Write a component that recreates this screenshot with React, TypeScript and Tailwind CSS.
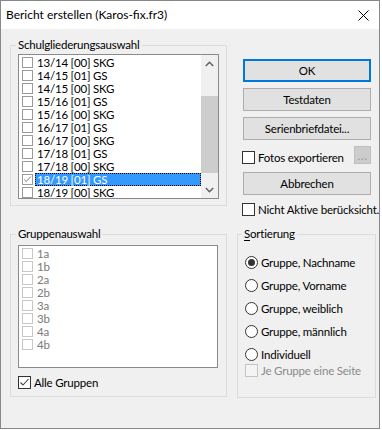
import React from 'react';

const schulItems = [
    '13/14 [00] SKG',
    '14/15 [01] GS',
    '14/15 [00] SKG',
    '15/16 [01] GS',
    '15/16 [00] SKG',
    '16/17 [01] GS',
    '16/17 [00] SKG',
    '17/18 [01] GS',
    '17/18 [00] SKG',
    '18/19 [01] GS',
    '18/19 [00] SKG',
];
const gruppen = ['1a', '1b', '2a', '2b', '3a', '3b', '4a', '4b'];
const sortierung = ['Gruppe, Nachname', 'Gruppe, Vorname', 'Gruppe, weiblich', 'Gruppe, männlich', 'Individuell'];

function Tick({ color }: { color: string }) {
    return (
        <svg width="11" height="11" viewBox="0 0 11 11" className="block">
            <path d="M1.5 5.5 L4 8 L9.5 2" fill="none" stroke={color} strokeWidth="1.1" />
        </svg>
    );
}

// 13px box used on the dialog surface
function Box({ checked, disabled }: { checked?: boolean; disabled?: boolean }) {
    return (
        <div
            className={
                disabled
                    ? 'flex h-[13px] w-[13px] shrink-0 items-center justify-center border border-[#c4c4c4] bg-[#f4f4f4]'
                    : 'flex h-[13px] w-[13px] shrink-0 items-center justify-center border border-[#333] bg-white'
            }
        >
            {checked && <Tick color="#444" />}
        </div>
    );
}

// smaller box inside the check list boxes
function ListBox({ checked, disabled }: { checked?: boolean; disabled?: boolean }) {
    return (
        <div
            className={
                disabled
                    ? 'flex h-[11px] w-[11px] shrink-0 items-center justify-center border border-[#c8c8c8]'
                    : 'flex h-[11px] w-[11px] shrink-0 items-center justify-center border border-[#9a9a9a]'
            }
        >
            {checked && <Tick color="#6a6a6a" />}
        </div>
    );
}

function Radio({ checked }: { checked?: boolean }) {
    return (
        <div className="flex h-[13px] w-[13px] shrink-0 items-center justify-center rounded-full border border-[#333] bg-white">
            {checked && <div className="h-[7px] w-[7px] rounded-full bg-[#333]" />}
        </div>
    );
}

function Button({ label, focused }: { label: string; focused?: boolean }) {
    return (
        <div
            className={
                focused
                    ? 'flex h-[23px] w-[128px] items-center justify-center border-2 border-[#0078d7] bg-[#e1e1e1]'
                    : 'flex h-[23px] w-[128px] items-center justify-center border border-[#adadad] bg-[#e1e1e1]'
            }
        >
            {label}
        </div>
    );
}

function ScrollBar() {
    return (
        <div className="flex w-[17px] shrink-0 flex-col bg-[#f0f0f0]">
            <div className="flex h-[17px] items-center justify-center">
                <svg width="9" height="6" viewBox="0 0 9 6">
                    <path d="M0.8 5 L4.5 1.3 L8.2 5" fill="none" stroke="#606060" strokeWidth="1.5" />
                </svg>
            </div>
            <div className="flex-1">
                <div className="mt-[24px] h-[77px] bg-[#cdcdcd]" />
            </div>
            <div className="flex h-[17px] items-center justify-center">
                <svg width="9" height="6" viewBox="0 0 9 6">
                    <path d="M0.8 1 L4.5 4.7 L8.2 1" fill="none" stroke="#606060" strokeWidth="1.5" />
                </svg>
            </div>
        </div>
    );
}

export default function App() {
    return (
        <div className="h-[430px] w-[382px] bg-white font-['Lato',sans-serif] text-[11.5px] tracking-[-0.2px] text-black">
            <div className="flex h-[429px] w-[380px] flex-col border border-[#888] bg-[#f0f0f0]">
                {/* title bar */}
                <div className="flex h-[28px] shrink-0 items-center justify-between bg-white pl-[5px] pr-[10px]">
                    <span className="text-[12px] leading-none tracking-normal">Bericht erstellen (Karos-fix.fr3)</span>
                    <svg width="11" height="11" viewBox="0 0 11 11">
                        <path d="M0.5 0.5 L10.5 10.5 M10.5 0.5 L0.5 10.5" stroke="#000" strokeWidth="1" />
                    </svg>
                </div>

                <div className="flex flex-col pl-[9px] pr-[3px] pt-[8px]">
                    {/* upper section */}
                    <div className="flex items-start gap-[10px]">
                        <fieldset className="w-[217px] shrink-0 border border-[#dcdcdc] pb-[6px] pl-[7px] pr-[7px]">
                            <legend className="-ml-[2px] px-[2px] leading-[16px]">Schulgliederungsauswahl</legend>
                            <div className="mt-[1px] flex h-[145px] w-[201px] border border-[#8a8a8a] bg-white">
                                <div className="flex-1 overflow-hidden pt-[1px]">
                                    {schulItems.map((item, i) => {
                                        const selected = i === 9;
                                        return (
                                            <div key={i} className="flex h-[13px] items-center pl-[3px]">
                                                <ListBox checked={selected} />
                                                <div
                                                    className={
                                                        selected
                                                            ? 'ml-[2px] flex h-[13px] flex-1 items-center border border-dotted border-black bg-[#3399ff] pl-[1px] leading-none text-white'
                                                            : 'ml-[2px] flex h-[13px] flex-1 items-center pl-[2px] leading-none'
                                                    }
                                                >
                                                    {item}
                                                </div>
                                            </div>
                                        );
                                    })}
                                </div>
                                <ScrollBar />
                            </div>
                        </fieldset>

                        <div className="flex w-[139px] flex-col pl-[5px] pt-[22px]">
                            <div className="flex flex-col gap-[6px] pl-[1px]">
                                <Button label="OK" focused />
                                <Button label="Testdaten" />
                                <Button label="Serienbriefdatei..." />
                            </div>
                            <div className="mt-[6px] flex h-[19px] w-[129px] items-start">
                                <div className="mt-[5px]">
                                    <Box />
                                </div>
                                <span className="ml-[3px] mt-[5px] whitespace-nowrap leading-[13px]">Fotos exportieren</span>
                                <div className="ml-auto flex h-[18px] w-[17px] items-center justify-center border border-[#bfbfbf] bg-[#cccccc] pt-[2px] text-[12px] leading-none tracking-[0.5px] text-[#9a9a9a]">
                                    ...
                                </div>
                            </div>
                            <div className="mt-[7px] pl-[1px]">
                                <Button label="Abbrechen" />
                            </div>
                            <div className="mt-[8px] flex h-[13px] items-center">
                                <Box />
                                <span className="ml-[3px] whitespace-nowrap leading-none">Nicht Aktive berücksicht.</span>
                            </div>
                        </div>
                    </div>

                    {/* lower section */}
                    <div className="mt-[10px] flex items-start gap-[10px]">
                        <fieldset className="w-[217px] shrink-0 border border-[#dcdcdc] pb-[7px] pl-[7px] pr-[8px]">
                            <legend className="-ml-[2px] px-[2px] leading-[16px]">Gruppenauswahl</legend>
                            <div className="mt-[3px] h-[123px] w-[200px] border border-[#8a8a8a] bg-white pt-[1px]">
                                {gruppen.map((g) => (
                                    <div key={g} className="flex h-[13px] items-center pl-[3px]">
                                        <ListBox disabled />
                                        <span className="ml-[4px] leading-none text-[#7a7a7a]">{g}</span>
                                    </div>
                                ))}
                            </div>
                            <div className="mt-[8px] flex h-[13px] items-center">
                                <Box checked />
                                <span className="ml-[3px] leading-none">Alle Gruppen</span>
                            </div>
                        </fieldset>

                        <fieldset className="h-[172px] w-[139px] shrink-0 border border-[#dcdcdc] pl-[7px]">
                            <legend className="-ml-[3px] px-[2px] leading-[16px]">
                                <span className="underline underline-offset-2">S</span>ortierung
                            </legend>
                            <div className="mt-[14px] flex flex-col gap-[10px]">
                                {sortierung.map((s, i) => (
                                    <div key={s} className="flex h-[13px] items-center">
                                        <Radio checked={i === 0} />
                                        <span className="ml-[3px] whitespace-nowrap leading-none">{s}</span>
                                    </div>
                                ))}
                            </div>
                            <div className="mt-[3px] flex h-[13px] items-center">
                                <Box disabled />
                                <span className="ml-[3px] whitespace-nowrap leading-none text-[#8a8a8a]">Je Gruppe eine Seite</span>
                            </div>
                        </fieldset>
                    </div>
                </div>
            </div>
        </div>
    );
}
